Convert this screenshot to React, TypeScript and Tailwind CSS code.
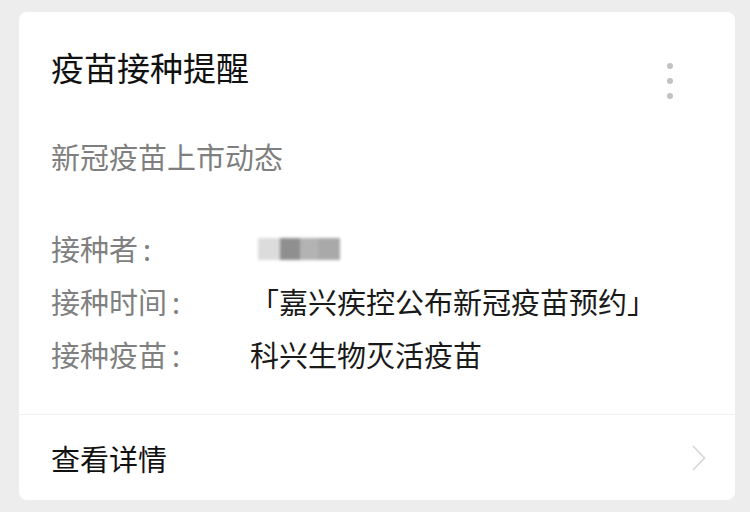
const font = { fontFamily: '"Noto Sans CJK SC", "Noto Sans", sans-serif' };

function BlurredName() {
  return (
    <div className="relative flex h-[22px] items-stretch blur-[1.5px]">
      <div className="w-[22px] bg-[#dcdcdc]" />
      <div className="w-[20px] bg-[#8f8f8f]" />
      <div className="w-[18px] bg-[#b3b3b3]" />
      <div className="w-[22px] bg-[#a9a9a9]" />
    </div>
  );
}

export default function App() {
  const rows = [
    { label: '接种者', value: null },
    { label: '接种时间', value: '「嘉兴疾控公布新冠疫苗预约」' },
    { label: '接种疫苗', value: '科兴生物灭活疫苗' }
  ];
  return (
    <div className="h-[512px] w-[750px] overflow-hidden bg-[#ededed] pl-[19px] pt-[12px]" style={font}>
      <div className="flex h-[488px] w-[716px] flex-col rounded-[8px] bg-white">
        <div className="flex items-start justify-between pl-[32px] pr-[62px] pt-[38px]">
          <div className="text-[33px] leading-[34px] text-[#111]">疫苗接种提醒</div>
          <div className="mt-[13px] flex flex-col gap-[9px]">
            <span className="h-[6px] w-[6px] rounded-full bg-[#c2c2c2]" />
            <span className="h-[6px] w-[6px] rounded-full bg-[#c2c2c2]" />
            <span className="h-[6px] w-[6px] rounded-full bg-[#c2c2c2]" />
          </div>
        </div>
        <div className="mt-[42px] pl-[32px] text-[29px] leading-[30px] text-[#7f7f7f]">新冠疫苗上市动态</div>
        <div className="mt-[63px] flex flex-col gap-[24px] pl-[32px]">
          {rows.map(({ label, value }) => (
            <div key={label} className="flex h-[29px] items-center">
              <div className="w-[199px] text-[29px] leading-[29px] text-[#808080]">
                {label}<span className="ml-[5px]">:</span>
              </div>
              {value ? (
                <div className="text-[29px] leading-[29px] text-[#1a1a1a]">{value}</div>
              ) : (
                <div className="pl-[8px]"><BlurredName /></div>
              )}
            </div>
          ))}
        </div>
        <div className="mt-auto flex h-[86px] items-center justify-between border-t border-[#efefef] pl-[32px] pr-[29px]">
          <div className="text-[29px] leading-[30px] text-[#111]">查看详情</div>
          <svg width="14" height="26" viewBox="0 0 14 26" fill="none">
            <polyline points="1,1 12.5,13 1,25" stroke="#d6d6d6" strokeWidth="1.6" />
          </svg>
        </div>
      </div>
    </div>
  );
}
